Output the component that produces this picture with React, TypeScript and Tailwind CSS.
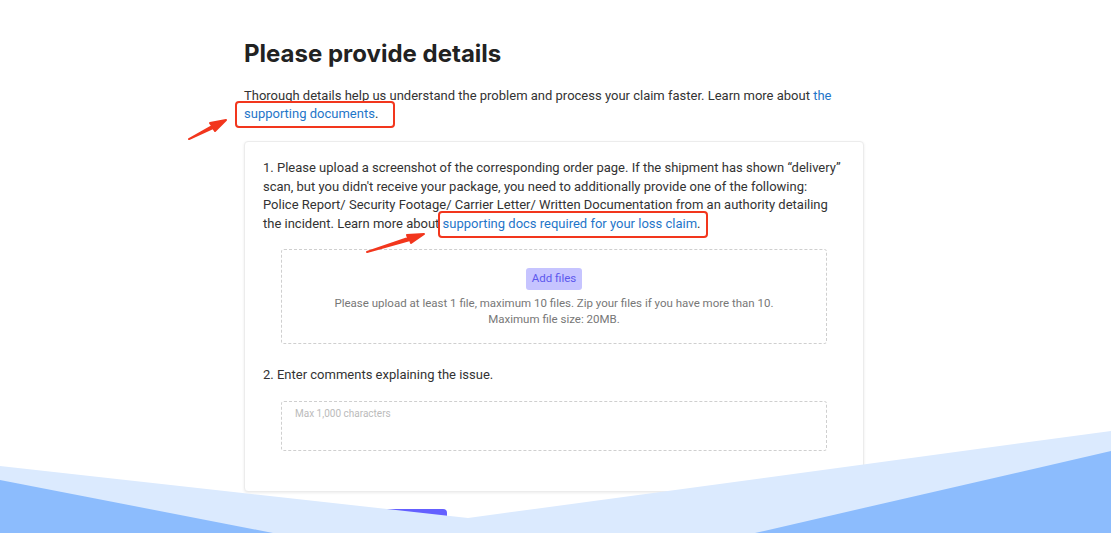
import React from 'react';

const App: React.FC = () => {
  return (
    <div className="relative h-[533px] w-full overflow-hidden bg-white font-['Roboto',sans-serif] text-[#333]">
      <div className="ml-[244px] w-[620px] pt-[38px]">
        {/* Title */}
        <h1 className="font-['Inter',sans-serif] text-[24px] font-bold leading-[32px] text-[#222]">
          Please provide details
        </h1>
        <p className="mt-[17px] text-[13px] leading-[18px]">
          Thorough details help us understand the problem and process your claim faster. Learn more about{' '}
          <a className="text-[#1f76c9]">the supporting documents</a>.
        </p>

        {/* Card */}
        <div className="mt-[18px] rounded-[4px] border border-[#ececec] bg-white px-[18px] pb-[40px] pt-[17px] shadow-[0_1px_3px_rgba(0,0,0,0.08)]">
          <p className="text-[13px] leading-[18.5px]">
            1. Please upload a screenshot of the corresponding order page. If the shipment has shown “delivery” scan, but
            you didn't receive your package, you need to additionally provide one of the following: Police Report/
            Security Footage/ Carrier Letter/ Written Documentation from an authority detailing the incident. Learn more
            about <a className="text-[#1f76c9]">supporting docs required for your loss claim</a>.
          </p>

          <div className="mx-[18px] mt-[16px] flex flex-col items-center rounded-[3px] border border-dashed border-[#cfcfcf] pb-[16px] pt-[18px]">
            <button className="h-[22px] rounded-[3px] bg-[#c6c4ff] px-[6px] text-[11.5px] text-[#5d58ee]">
              Add files
            </button>
            <p className="mt-[5px] text-center text-[11.5px] leading-[16px] text-[#777]">
              Please upload at least 1 file, maximum 10 files. Zip your files if you have more than 10.
              <br />
              Maximum file size: 20MB.
            </p>
          </div>

          <p className="mt-[22px] text-[13px] leading-[18px]">2. Enter comments explaining the issue.</p>

          <div className="mx-[18px] mt-[17px] h-[50px] rounded-[3px] border border-dashed border-[#cfcfcf] px-[13px] pt-[5px]">
            <p className="text-[10px] leading-[14px] text-[#bbb]">Max 1,000 characters</p>
          </div>
        </div>

        <button className="mt-[17px] h-[36px] w-[203px] rounded-[4px] bg-[#6460ff]" />
      </div>

      {/* Bottom waves */}
      <svg className="absolute inset-0 h-[533px] w-[1111px]" viewBox="0 0 1111 533">
        <polygon points="0,466 468,518 1111,431 1111,533 0,533" fill="#dbeafe" />
        <polygon points="0,480 273,533 0,533" fill="#8cbcfd" />
        <polygon points="755,533 1111,451 1111,533" fill="#8cbcfd" />
      </svg>

      {/* Annotations */}
      <div className="absolute left-[235px] top-[101px] h-[27px] w-[160px] rounded-[4px] border-2 border-[#f2361d]" />
      <div className="absolute left-[438px] top-[211px] h-[27px] w-[270px] rounded-[4px] border-2 border-[#f2361d]" />
      <svg className="absolute inset-0 h-[533px] w-[1111px]" viewBox="0 0 1111 533">
        <path d="M189,139 L212,126 L210,123 L226,120 L215,131 L213,128 Z" fill="#f2361d" stroke="#f2361d" strokeWidth="2" strokeLinejoin="round" />
        <path d="M367,252 L408,238 L407,235 L424,234 L411,243 L410,240 Z" fill="#f2361d" stroke="#f2361d" strokeWidth="2" strokeLinejoin="round" />
      </svg>
    </div>
  );
};

export default App;
